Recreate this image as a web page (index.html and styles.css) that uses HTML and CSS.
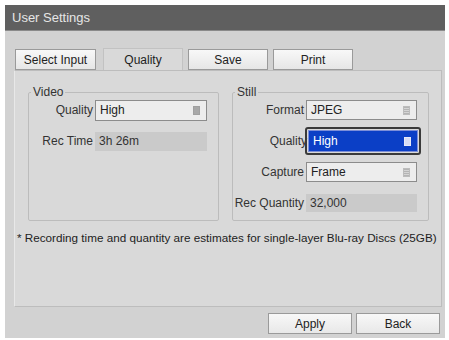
FILE: index.html
```html
<!DOCTYPE html>
<html lang="en">
<head>
  <meta charset="UTF-8" />
  <title>User Settings</title>
  <link rel="stylesheet" href="styles.css">
</head>
<body>

  <div class="window">
    <!-- Title -->
    <div class="title">User Settings</div>

    <div class="body">
      <!-- Tabs -->
      <div class="tabs">
        <button class="tab tab-first">Select Input</button>
        <button class="tab active">Quality</button>
        <button class="tab">Save</button>
        <button class="tab">Print</button>
      </div>

      <!-- Quality panel -->
      <div class="panel">
        <div class="groups">
          <fieldset class="group video">
            <legend>Video</legend>
            <div class="row">
              <span class="label">Quality</span>
              <div class="select">High<span class="grip"></span></div>
            </div>
            <div class="row">
              <span class="label">Rec Time</span>
              <div class="readonly">3h 26m</div>
            </div>
          </fieldset>

          <fieldset class="group still">
            <legend>Still</legend>
            <div class="row">
              <span class="label">Format</span>
              <div class="select">JPEG<span class="grip"></span></div>
            </div>
            <div class="row">
              <span class="label">Quality</span>
              <div class="focus-ring">
                <div class="select selected">High<span class="grip"></span></div>
              </div>
            </div>
            <div class="row">
              <span class="label">Capture</span>
              <div class="select">Frame<span class="grip"></span></div>
            </div>
            <div class="row">
              <span class="label">Rec Quantity</span>
              <div class="readonly">32,000</div>
            </div>
          </fieldset>
        </div>

        <p class="note">* Recording time and quantity are estimates for single-layer Blu-ray Discs (25GB)</p>
      </div>

      <!-- Buttons -->
      <div class="actions">
        <button class="btn">Apply</button>
        <button class="btn">Back</button>
      </div>
    </div>
  </div>

</body>
</html>
```

FILE: styles.css
```css
body {
  margin: 0;
  background-color: #fff;
  font-family: "Liberation Sans", Arial, sans-serif;
  font-size: 12px;
  color: #222;
}

.window {
  margin: 5px 4px 0 5px;
  height: 333px;
  display: flex;
  flex-direction: column;
  background-color: #d2d2d2;
}

.title {
  height: 26px;
  line-height: 26px;
  padding-left: 7px;
  background-color: #5f5f5f;
  border-bottom: 1px solid #8a8a8a;
  box-sizing: border-box;
  color: #e6e6e6;
  font-size: 13px;
}

.body {
  flex: 1;
  display: flex;
  flex-direction: column;
  padding: 18px 3px 4px 9px;
}

.tabs {
  display: flex;
  gap: 5px;
  height: 21px;
  padding-left: 1px;
}

.tab {
  width: 80px;
  height: 21px;
  padding: 0;
  border: 1px solid #9a9a9a;
  background: linear-gradient(#f8f8f8, #e6e6e6);
  font-family: inherit;
  font-size: 12px;
  color: #222;
}

.tab-first {
  width: 81px;
  margin-right: 2px;
}

.tab.active {
  height: 22px;
  margin-top: -1px;
  border: 1px solid #c2c2c2;
  border-bottom: none;
  background: #d9d9d9;
  position: relative;
  z-index: 1;
}

.panel {
  height: 237px;
  box-sizing: border-box;
  border: 1px solid #bdbdbd;
  border-left-color: #e8e8e8;
  background-color: #d9d9d9;
  padding: 15px 12px 0 13px;
}

.groups {
  display: flex;
  gap: 13px;
}

.group {
  margin: 0;
  padding: 0 11px 6px 0;
  border: 1px solid #bcbcbc;
  border-radius: 2px;
  min-width: 0;
}

.video {
  width: 191px;
  box-sizing: border-box;
}

.still {
  width: 197px;
  box-sizing: border-box;
}

legend {
  padding: 0 2px;
  margin-left: 2px;
  line-height: 13px;
  color: #333;
}

.row {
  display: flex;
  align-items: center;
  height: 22px;
  margin-bottom: 9px;
}

.row:last-child {
  margin-bottom: 0;
}

.label {
  flex: 1;
  text-align: right;
  padding-right: 2px;
  white-space: nowrap;
  color: #333;
}

.select {
  width: 112px;
  height: 21px;
  box-sizing: border-box;
  border: 1px solid #8c8c8c;
  background-color: #ededed;
  display: flex;
  align-items: center;
  justify-content: space-between;
  padding: 0 6px 0 4px;
}

.still .select {
  width: 111px;
  height: 20px;
}

.grip {
  width: 5px;
  height: 7px;
  background: repeating-linear-gradient(#b4b4b4 0 1px, #d4d4d4 1px 2px);
  border: 1px solid #bcbcbc;
}

.video .grip {
  background: #a8a8a8;
  border-color: #a0a0a0;
}

.focus-ring {
  border: 2px solid #3a3a3a;
  border-radius: 3px;
  padding: 1px;
  margin: 0 -4px 0 -4px;
  height: 28px;
  box-sizing: border-box;
  display: flex;
  align-items: center;
  position: relative;
}

.select.selected {
  width: 110px;
  height: 22px;
  background-color: #0b3fc6;
  border: 1px solid #7d8fd8;
  color: #fff;
}

.selected .grip {
  background: #d6dcf4;
  border-color: #e6e9f8;
}

.readonly {
  width: 112px;
  height: 19px;
  box-sizing: border-box;
  background-color: #cacaca;
  padding-left: 4px;
  line-height: 19px;
  color: #333;
}

.still .readonly {
  width: 111px;
  height: 18px;
  line-height: 18px;
}

.note {
  margin: 10px 0 0 -11px;
  white-space: nowrap;
  font-size: 11.7px;
  color: #222;
}

.actions {
  display: flex;
  justify-content: flex-end;
  gap: 4px;
  margin-top: 6px;
  padding-right: 2px;
}

.btn {
  width: 84px;
  height: 21px;
  padding: 0;
  border: 1px solid #9a9a9a;
  background: linear-gradient(#f8f8f8, #e8e8e8);
  font-family: inherit;
  font-size: 12px;
  color: #222;
}
```
